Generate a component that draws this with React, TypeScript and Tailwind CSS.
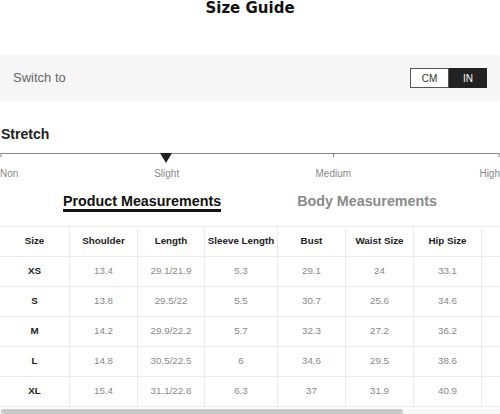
import React from "react";

const cols = [
  { label: "Size", w: "w-[70px]" },
  { label: "Shoulder", w: "w-[68px]" },
  { label: "Length", w: "w-[67px]" },
  { label: "Sleeve Length", w: "w-[73px]" },
  { label: "Bust", w: "w-[68px]" },
  { label: "Waist Size", w: "w-[68px]" },
  { label: "Hip Size", w: "w-[68px]" },
  { label: "", w: "w-[100px]" },
];

const rows = [
  ["XS", "13.4", "29.1/21.9", "5.3", "29.1", "24", "33.1", ""],
  ["S", "13.8", "29.5/22", "5.5", "30.7", "25.6", "34.6", ""],
  ["M", "14.2", "29.9/22.2", "5.7", "32.3", "27.2", "36.2", ""],
  ["L", "14.8", "30.5/22.5", "6", "34.6", "29.5", "38.6", ""],
  ["XL", "15.4", "31.1/22.8", "6.3", "37", "31.9", "40.9", ""],
];

function StretchScale() {
  return (
    <div className="mt-[10px]">
      {/* scale line, ticks and the marker */}
      <svg width="500" height="12" viewBox="0 0 500 12" className="block">
        <line x1="0.5" y1="1.5" x2="499.5" y2="1.5" stroke="#8a8a8a" strokeWidth="1" />
        <line x1="1" y1="1" x2="1" y2="5" stroke="#8a8a8a" strokeWidth="1" />
        <line x1="333.5" y1="1" x2="333.5" y2="5" stroke="#8a8a8a" strokeWidth="1" />
        <line x1="499" y1="1" x2="499" y2="5" stroke="#8a8a8a" strokeWidth="1" />
        <polygon points="160,1 172,1 166,11" fill="#222" />
      </svg>
      <div className="mt-[4px] grid grid-cols-6 text-[10px] leading-[12px] text-[#8a8a8a]">
        <span className="text-left">Non</span>
        <span className="col-span-2 text-center">Slight</span>
        <span className="col-span-2 text-center">Medium</span>
        <span className="text-right">High</span>
      </div>
    </div>
  );
}

export default function App() {
  return (
    <div className="w-[500px] h-[414px] overflow-hidden bg-white font-['Liberation_Sans',Arial,sans-serif]">
      <h1 className="text-center font-['DejaVu_Sans',sans-serif] font-bold text-[15px] leading-[17px] text-[#111]">
        Size Guide
      </h1>

      <div className="mt-[38px] h-[46px] bg-[#f6f6f6] flex items-center justify-between pl-[13px] pr-[13px]">
        <span className="text-[13px] text-[#666]">Switch to</span>
        <div className="flex h-[20px] text-[10px]">
          <div className="w-[39px] flex items-center justify-center bg-white border border-[#555] text-[#333]">
            CM
          </div>
          <div className="w-[38px] flex items-center justify-center bg-[#222] text-white">
            IN
          </div>
        </div>
      </div>

      <div className="mt-[25px] pl-[1px] text-[14px] leading-[16px] font-bold text-[#222]">Stretch</div>
      <StretchScale />

      <div className="mt-[13px] flex justify-center gap-[76px] text-[14.3px] leading-[16px] font-bold">
        <span className="text-[#111] border-b-[3px] border-[#111]">Product Measurements</span>
        <span className="text-[#8a8a8a]">Body Measurements</span>
      </div>

      <div className="mt-[14px] w-[630px]">
        <div className="border-t border-[#ebebeb]">
          <div className="flex h-[30px] border-b border-[#ebebeb]">
            {cols.map((c, i) => (
              <div
                key={i}
                className={`${c.w} shrink-0 border-r border-[#ebebeb] flex items-center justify-center text-[9.8px] font-bold text-[#222]`}
              >
                {c.label}
              </div>
            ))}
          </div>
          {rows.map((r, ri) => (
            <div key={ri} className="flex h-[30px] border-b border-[#ebebeb]">
              {r.map((v, ci) => (
                <div
                  key={ci}
                  className={`${cols[ci].w} shrink-0 border-r border-[#ebebeb] flex items-center justify-center text-[9.8px] ${
                    ci === 0 ? "font-bold text-[#222]" : "text-[#8a8a8a]"
                  }`}
                >
                  {v}
                </div>
              ))}
            </div>
          ))}
        </div>
      </div>

      {/* horizontal scrollbar of the table */}
      <div className="mt-[2px] h-[5px] w-[500px] bg-[#f7f7f7]">
        <div className="ml-[1px] h-[5px] w-[402px] rounded-full bg-[#c9c9c9]" />
      </div>
    </div>
  );
}
